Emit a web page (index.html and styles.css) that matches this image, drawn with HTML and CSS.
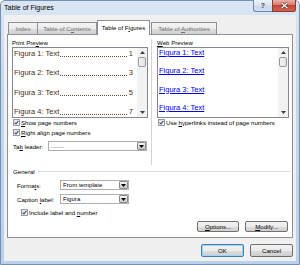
FILE: index.html
```html
<!DOCTYPE html>
<html lang="en">
<head>
    <meta charset="UTF-8">
    <title>Table of Figures</title>
    <link rel="stylesheet" href="styles.css">
</head>
<body>

<div class="window">
    <div class="titlebar">
        <span class="title">Table of Figures</span>
        <div class="caption-buttons">
            <span class="help-btn">?</span>
            <span class="close-btn">
                <svg width="9" height="7" viewBox="0 0 9 7"><path d="M1.5 0.8 L7.5 6.2 M7.5 0.8 L1.5 6.2" stroke="#5a1a14" stroke-width="2.4"/><path d="M1.5 0.8 L7.5 6.2 M7.5 0.8 L1.5 6.2" stroke="#fff" stroke-width="1.3"/></svg>
            </span>
        </div>
    </div>

    <div class="client">
        <div class="tabs">
            <span class="tab tab-index">Index</span>
            <span class="tab tab-toc">Table of C<u>o</u>ntents</span>
            <span class="tab tab-tof active">Table of F<u>i</u>gures</span>
            <span class="tab tab-toa">Table of <u>A</u>uthorities</span>
        </div>

        <div class="panel">
            <div class="previews">
                <!-- Print preview column -->
                <div class="print-col">
                    <div class="col-label">Print Pre<u>v</u>iew</div>
                    <div class="preview-box">
                        <div class="preview-list print-list">
                            <div class="entry"><span>Figura 1: Text</span><span class="dots"></span><span>1</span></div>
                            <div class="entry"><span>Figura 2: Text</span><span class="dots"></span><span>3</span></div>
                            <div class="entry"><span>Figura 3: Text</span><span class="dots"></span><span>5</span></div>
                            <div class="entry"><span>Figura 4: Text</span><span class="dots"></span><span>7</span></div>
                        </div>
                        <div class="scrollbar">
                            <span class="arrow"><svg width="5" height="3" viewBox="0 0 5 3"><path d="M0 3 L2.5 0 L5 3 Z" fill="#404040"/></svg></span>
                            <span class="thumb"></span>
                            <span class="track"></span>
                            <span class="arrow"><svg width="5" height="3" viewBox="0 0 5 3"><path d="M0 0 L2.5 3 L5 0 Z" fill="#404040"/></svg></span>
                        </div>
                    </div>
                    <div class="check"><span class="box"><svg width="5" height="5" viewBox="0 0 5 5"><path d="M0.6 2.6 L2 4 L4.4 0.8" fill="none" stroke="#2d4b8e" stroke-width="1.1"/></svg></span><span><u>S</u>how page numbers</span></div>
                    <div class="check check-second"><span class="box"><svg width="5" height="5" viewBox="0 0 5 5"><path d="M0.6 2.6 L2 4 L4.4 0.8" fill="none" stroke="#2d4b8e" stroke-width="1.1"/></svg></span><span><u>R</u>ight align page numbers</span></div>
                    <div class="field-row leader-row">
                        <span class="field-label leader-label">Ta<u>b</u> leader:</span>
                        <div class="select leader-select">
                            <span class="select-text">........</span>
                            <span class="select-arrow"><svg width="5" height="3" viewBox="0 0 5 3"><path d="M0 0 L2.5 3 L5 0 Z" fill="#000"/></svg></span>
                        </div>
                    </div>
                </div>

                <!-- Web preview column -->
                <div class="web-col">
                    <div class="col-label"><u>W</u>eb Preview</div>
                    <div class="preview-box web-box">
                        <div class="preview-list web-list">
                            <a class="link">Figura 1: Text</a>
                            <a class="link">Figura 2: Text</a>
                            <a class="link">Figura 3: Text</a>
                            <a class="link">Figura 4: Text</a>
                        </div>
                        <div class="scrollbar">
                            <span class="arrow"><svg width="5" height="3" viewBox="0 0 5 3"><path d="M0 3 L2.5 0 L5 3 Z" fill="#404040"/></svg></span>
                            <span class="thumb"></span>
                            <span class="track"></span>
                            <span class="arrow"><svg width="5" height="3" viewBox="0 0 5 3"><path d="M0 0 L2.5 3 L5 0 Z" fill="#404040"/></svg></span>
                        </div>
                    </div>
                    <div class="check"><span class="box"><svg width="5" height="5" viewBox="0 0 5 5"><path d="M0.6 2.6 L2 4 L4.4 0.8" fill="none" stroke="#2d4b8e" stroke-width="1.1"/></svg></span><span>Use <u>h</u>yperlinks instead of page numbers</span></div>
                </div>
            </div>

            <!-- General options -->
            <div class="general-head"><span>General</span></div>
            <div class="field-row general-row">
                <span class="field-label general-label">Forma<u>t</u>s:</span>
                <div class="select general-select">
                    <span class="select-text">From template</span>
                    <span class="select-arrow"><svg width="5" height="3" viewBox="0 0 5 3"><path d="M0 0 L2.5 3 L5 0 Z" fill="#000"/></svg></span>
                </div>
            </div>
            <div class="field-row general-row caption-row">
                <span class="field-label general-label">Caption <u>l</u>abel:</span>
                <div class="select general-select">
                    <span class="select-text">Figura</span>
                    <span class="select-arrow"><svg width="5" height="3" viewBox="0 0 5 3"><path d="M0 0 L2.5 3 L5 0 Z" fill="#000"/></svg></span>
                </div>
            </div>
            <div class="check include-check"><span class="box"><svg width="5" height="5" viewBox="0 0 5 5"><path d="M0.6 2.6 L2 4 L4.4 0.8" fill="none" stroke="#2d4b8e" stroke-width="1.1"/></svg></span><span>Include label and <u>n</u>umber</span></div>

            <div class="panel-buttons">
                <span class="button options-btn"><u>O</u>ptions...</span>
                <span class="button modify-btn"><u>M</u>odify...</span>
            </div>
        </div>

        <div class="dialog-buttons">
            <span class="button default-btn">OK</span>
            <span class="button">Cancel</span>
        </div>
    </div>
</div>

</body>
</html>
```

FILE: styles.css
```css
* {
    box-sizing: border-box;
}

body {
    margin: 0;
    font-family: "Liberation Sans", Arial, sans-serif;
    font-size: 6.1px;
    color: #000;
}

u {
    text-decoration-thickness: 0.5px;
    text-underline-offset: 1px;
}

/* Window frame */
.window {
    width: 300px;
    height: 265px;
    display: flex;
    flex-direction: column;
    padding: 0 3px 3px;
    background: linear-gradient(#dae6f4, #c5d8ee 30%, #bad1ec);
    border: 1px solid #7890b0;
    border-radius: 5px 5px 0 0;
}

.titlebar {
    height: 14px;
    display: flex;
    justify-content: space-between;
    align-items: flex-start;
}

.title {
    font-size: 7px;
    line-height: 14px;
}

.caption-buttons {
    display: flex;
    margin-top: -1px;
}

.help-btn,
.close-btn {
    height: 12px;
    display: flex;
    align-items: center;
    justify-content: center;
    border: 1px solid #7088a8;
    border-top: none;
}

.help-btn {
    width: 19px;
    border-right: none;
    border-radius: 0 0 0 3px;
    background: linear-gradient(#eef3f9, #d8e3f0 50%, #c8d7ea 51%, #d4e1f0);
    font-size: 7px;
    font-weight: bold;
    color: #2b3e58;
}

.close-btn {
    width: 24px;
    border-color: #8b3a30;
    border-radius: 0 0 3px 0;
    background: linear-gradient(#eab0a4, #d77c6e 45%, #c4473a 50%, #d5604e);
}

/* Client area */
.client {
    flex: 1;
    display: flex;
    flex-direction: column;
    padding: 5px 3px 0;
    background: #f0f0f0;
}

.tabs {
    display: flex;
    height: 15px;
    margin-bottom: -1px;
    padding-left: 1px;
}

.tab {
    height: 12px;
    margin-top: 2px;
    line-height: 11px;
    text-align: center;
    white-space: nowrap;
    color: #6e6e6e;
    border: 1px solid #8d9099;
    border-bottom: none;
    background: linear-gradient(#f4f4f4, #ebebeb 50%, #dedede 51%, #d2d2d2);
}

.tab-index {
    width: 30px;
}

.tab-toc {
    width: 60px;
    margin-left: -1px;
}

.tab-tof {
    width: 53px;
    margin-left: 0;
}

.tab-toa {
    width: 66px;
    margin-left: 1px;
}

.tab.active {
    position: relative;
    z-index: 1;
    height: 15px;
    margin-top: 0;
    line-height: 13px;
    color: #000;
    background: #fff;
}

.panel {
    height: 204px;
    display: flex;
    flex-direction: column;
    background: #fff;
    border: 1px solid #8d9099;
}

/* Preview columns */
.previews {
    display: flex;
    height: 130px;
    padding: 4px 0 0 4px;
}

.print-col {
    width: 136px;
    margin-right: 3px;
}

.web-col {
    width: 138px;
    padding-left: 5px;
    border-left: 1px solid #d4d4d4;
}

.col-label {
    height: 8px;
    line-height: 8px;
}

.preview-box {
    height: 71px;
    display: flex;
    border: 1px solid #828790;
    background: #fff;
}

.preview-list {
    flex: 1;
    min-width: 0;
    display: flex;
    flex-direction: column;
    overflow: hidden;
    font-size: 7.5px;
    line-height: 8px;
}

.print-list {
    gap: 11.3px;
    padding: 2px 4px 0 1px;
    color: #4a2f15;
}

.web-list {
    gap: 10.3px;
    padding: 1px 0 0 1px;
}

.entry {
    display: flex;
    white-space: nowrap;
}

/* dotted tab leader between caption and page number */
.dots {
    flex: 1;
    margin: 0 2px 0 1px;
    background: linear-gradient(90deg, #6a4d30 1px, transparent 1px) 0 6px / 2px 1px repeat-x;
}

.link {
    color: #0000f0;
    text-decoration: underline;
    text-decoration-thickness: 0.6px;
}

.scrollbar {
    width: 10px;
    display: flex;
    flex-direction: column;
    background: #f2f2f2;
}

.scrollbar .arrow {
    height: 9px;
    display: flex;
    align-items: center;
    justify-content: center;
}

.scrollbar .thumb {
    height: 10px;
    margin: 0 1px;
    border: 1px solid #9a9a9a;
    border-radius: 2px;
    background: linear-gradient(90deg, #f4f4f4, #e2e2e2);
}

.scrollbar .track {
    flex: 1;
}

/* Checkboxes */
.check {
    height: 8px;
    display: flex;
    align-items: center;
    gap: 1px;
    padding-left: 1px;
    white-space: nowrap;
}

.check-second {
    margin-top: 2px;
}

.box {
    width: 7px;
    height: 7px;
    display: flex;
    align-items: center;
    justify-content: center;
    border: 1px solid #9a9a9a;
    background: linear-gradient(135deg, #e2e2e2, #fbfbfb);
}

/* Dropdown fields */
.field-row {
    height: 10px;
    display: flex;
    align-items: center;
}

.leader-row {
    margin-top: 5px;
    padding-left: 1px;
}

.leader-label {
    width: 35px;
}

.select {
    height: 10px;
    display: flex;
    border: 1px solid #abadb3;
    background: #fff;
}

.leader-select {
    width: 99px;
}

.select-text {
    flex: 1;
    padding-left: 2px;
    line-height: 8px;
    white-space: nowrap;
}

.select-arrow {
    width: 9px;
    display: flex;
    align-items: center;
    justify-content: center;
    border: 1px solid #8b8b8b;
    border-radius: 1px;
    background: linear-gradient(#f4f4f4, #e4e4e4 50%, #d6d6d6 51%, #cdcdcd);
}

.general-head {
    height: 8px;
    margin-top: 2px;
    display: flex;
    align-items: center;
    gap: 3px;
    padding: 0 2px 0 5px;
}

.general-head::after {
    content: "";
    flex: 1;
    border-top: 1px solid #dcdcdc;
}

.general-row {
    margin-top: 5px;
    padding-left: 9px;
}

.caption-row {
    margin-top: 4px;
}

.general-label {
    width: 43px;
}

.general-select {
    width: 69px;
}

.include-check {
    margin-top: 4px;
    padding-left: 13px;
}

/* Buttons */
.button {
    height: 100%;
    display: flex;
    align-items: center;
    justify-content: center;
    border: 1px solid #707070;
    border-radius: 2px;
    background: linear-gradient(#f2f2f2, #ebebeb 50%, #dddddd 51%, #cfcfcf);
}

.panel-buttons {
    height: 11px;
    margin-top: 5px;
    display: flex;
    justify-content: flex-end;
    gap: 6px;
    padding-right: 4px;
}

.options-btn {
    width: 42px;
}

.modify-btn {
    width: 43px;
}

.dialog-buttons {
    height: 13px;
    margin-top: 6px;
    display: flex;
    justify-content: flex-end;
    gap: 6px;
}

.dialog-buttons .button {
    width: 43px;
}

.default-btn {
    border-color: #3c7fb1;
    box-shadow: inset 0 0 0 1px #9fd6f5;
}
```
